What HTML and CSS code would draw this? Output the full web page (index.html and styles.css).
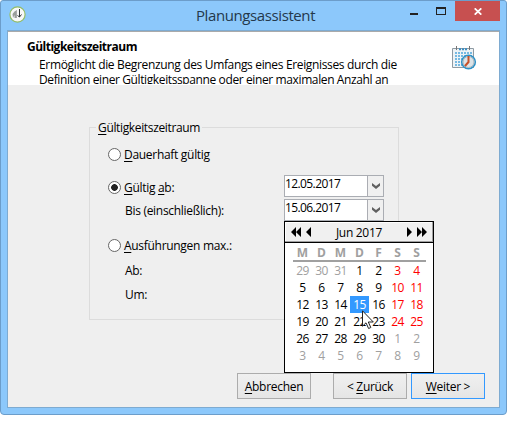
FILE: index.html
```html
<!DOCTYPE html>
<html lang="de">
<head>
<meta charset="utf-8">
<title>Planungsassistent</title>
<link rel="stylesheet" href="styles.css">
</head>
<body>
<main class="window">
  <header class="titlebar">
    <svg class="app-icon" width="17" height="17" viewBox="0 0 17 17"><circle cx="8.5" cy="8.5" r="7.6" fill="#f8f8f8" stroke="#94bd67" stroke-width="1.2"/><path d="M3.5 8l2-2.5L8 4v3l-1 1v4H5.5V9L4 12z" fill="#999d9a"/><path d="M7.5 5v7" stroke="#aaa"/><path d="M10.5 3v8M8.5 9.5l2 1.5 2-2.5" stroke="#303434" fill="none"/></svg>
    <h1 class="title">Planungsassistent</h1>
    <div class="controls">
      <svg class="glyph" width="38" height="20" viewBox="0 0 38 20"><path d="M1 12h8v2H1z" fill="#222"/><path d="M27 6h10v8H27zM28 8v5h8V8z" fill="#222" fill-rule="evenodd"/></svg>
      <div class="close"><svg width="8" height="7" viewBox="0 0 8 7"><path d="M.7.3l6.6 6.4M7.3.3L.7 6.7" stroke="#fff" stroke-width="1.7"/></svg></div>
    </div>
  </header>
  <section class="client">
    <header class="banner">
      <div class="banner-copy">
        <h2 class="heading">Gültigkeitszeitraum</h2>
        <p class="desc"><span class="d1">Ermöglicht die Begrenzung des Umfangs eines Ereignisses durch die</span><span class="d2">Definition einer Gültigkeitsspanne oder einer maximalen Anzahl an</span></p>
      </div>
      <svg class="schedule" width="25" height="24" viewBox="0 0 25 24"><path d="M.5 2.5h21v19H.5z" fill="#eef3f6" stroke="#8e9aa3"/><path d="M4.5 0v4M17.5 0v4" stroke="#777"/><path d="M7 3.2h9" stroke="#3a8dc2" stroke-width="2" stroke-dasharray="2 1"/><path d="M3 7h17M3 10h17M3 13h15M3 16h8M3 19h7" stroke="#4fa6dc" stroke-width="1.7" stroke-dasharray="2 1"/><circle cx="16.5" cy="16" r="6.8" fill="#dce3e7" stroke="#2d91c7" stroke-width="1.6"/><circle cx="16.5" cy="16" r="5.5" fill="none" stroke="#a8b4bc"/><path d="M16.5 10v6l-3.5 4" fill="none" stroke="#c6512a" stroke-width="2"/></svg>
    </header>
    <div class="body">
      <section class="group">
        <h3 class="legend"><u>G</u>ültigkeitszeitraum</h3>
        <div class="row r1"><i class="radio"></i><span><u>D</u>auerhaft gültig</span></div>
        <div class="row r2"><i class="radio on"></i><span><u>G</u>ültig <u>a</u>b:</span>
          <div class="combo"><span>12.05.2017</span><b><svg width="8" height="6" viewBox="0 0 8 6"><path d="M0 0l4 3 4-3v2.7L4 6 0 2.7z" fill="#606060"/></svg></b></div></div>
        <div class="row r3"><i class="spacer"></i><span>Bis (einschließlich):</span>
          <div class="combo"><span>15.06.2017</span><b><svg width="8" height="6" viewBox="0 0 8 6"><path d="M0 0l4 3 4-3v2.7L4 6 0 2.7z" fill="#606060"/></svg></b>
            <div class="calendar">
              <div class="cal-head">
                <svg width="21" height="10" viewBox="0 0 21 10"><path d="M5 0v10L0 5zM10 0v10L5 5zM20 0v10l-5-5z"/></svg>
                <span>Jun 2017</span>
                <svg width="21" height="10" viewBox="0 0 21 10"><path d="M1 0v10l5-5zM11 0v10l5-5zM16 0v10l5-5z"/></svg>
              </div>
              <div class="days names"><span>M</span><span>D</span><span>M</span><span>D</span><span>F</span><span>S</span><span>S</span></div>
              <div class="days">
                <span class="off">29</span><span class="off">30</span><span class="off">31</span><span>1</span><span>2</span><span class="we">3</span><span class="we">4</span>
                <span>5</span><span>6</span><span>7</span><span>8</span><span>9</span><span class="we">10</span><span class="we">11</span>
                <span>12</span><span>13</span><span>14</span><span class="sel">15</span><span>16</span><span class="we">17</span><span class="we">18</span>
                <span>19</span><span>20</span><span>21</span><span>22</span><span>23</span><span class="we">24</span><span class="we">25</span>
                <span>26</span><span>27</span><span>28</span><span>29</span><span>30</span><span class="off">1</span><span class="off">2</span>
                <span class="off">3</span><span class="off">4</span><span class="off">5</span><span class="off">6</span><span class="off">7</span><span class="off">8</span><span class="off">9</span>
              </div>
              <svg class="cursor" width="13" height="20" viewBox="0 0 13 20"><path d="M.5.8v15.4l3.5-3.4 2.6 5.7 2.2-1-2.5-5.5h5z" fill="#fff" stroke="#222"/></svg>
            </div>
          </div></div>
        <div class="row r4"><i class="radio"></i><span><u>A</u>usführungen max.:</span></div>
        <div class="row r5"><i class="spacer"></i><span>Ab:</span></div>
        <div class="row r6"><i class="spacer"></i><span>Um:</span></div>
      </section>
      <footer class="actions">
        <button><span><u>A</u>bbrechen</span></button>
        <button class="back"><span>&lt; <u>Z</u>urück</span></button>
        <button class="next"><span><u>W</u>eiter &gt;</span></button>
      </footer>
    </div>
  </section>
</main>
</body>
</html>
```
FILE: styles.css
```css
* { box-sizing: border-box; }
body { margin: 0; background: #fff; font: 12px/15px "Open Sans", "Noto Sans", sans-serif; letter-spacing: -.3px; color: #000; overflow: hidden; }
h1, h2, h3, p { margin: 0; font-size: 12px; font-weight: 400; }
u { text-decoration: underline; text-underline-offset: 2px; text-decoration-thickness: 1px; text-decoration-skip-ink: none; }
svg { display: block; flex: none; }
.window { width: 507px; height: 415px; padding: 0 6px 6px; background: #8cc8fb; border: 1px solid #6c9dca; border-radius: 3px 3px 4px 4px; }
.titlebar { height: 29px; display: flex; align-items: flex-start; }
.app-icon { margin: 5px 0 0 2px; }
.title { margin: 4px 0 0 170px; font-size: 15px; line-height: 20px; color: #24384b; white-space: nowrap; letter-spacing: -.5px; }
.title { letter-spacing: -.4px; }
.controls { margin-left: auto; display: flex; }
.glyph { margin-right: 8px; }
.close { width: 45px; height: 20px; background: #c75050; display: flex; align-items: center; justify-content: center; }
.client { height: 378px; border: 1px solid #7eabd1; background: #efefef; }
.banner { height: 54px; border-top: 1px solid #aaa; background: #fff; display: flex; overflow: hidden; }
.banner-copy { width: 424px; padding: 6px 0 0 19px; height: 52px; overflow: hidden; }
.heading { font-weight: 700; line-height: 17px; letter-spacing: -.5px; }
.desc { margin: 2px 0 0 12px; white-space: nowrap; }
.d1, .d2 { display: block; height: 15px; }
.d1 { letter-spacing: -.345px; }
.d2 { letter-spacing: -.385px; }
.schedule { margin: 14px 0 0 20px; }
.body { padding: 42px 14px 0 81px; }
.group { width: 310px; height: 193px; border: 1px solid #dcdcdc; }
.legend { width: max-content; margin: -8px 0 0 6px; padding: 0 2px; background: #efefef; height: 15px; letter-spacing: -.35px; }
.row { display: flex; align-items: center; height: 22px; padding-left: 18px; position: relative; white-space: nowrap; }
.r1 { margin-top: 8px; }
.r2 { margin-top: 11px; }
.r3 { margin-top: 1px; }
.r4 { margin-top: 13px; }
.r5 { margin-top: 3px; }
.r6 { margin-top: 2px; }
.radio { width: 13px; height: 13px; margin-right: 3px; border: 1px solid #666; border-radius: 50%; background: #fff; }
.on { background: radial-gradient(circle, #222 0 3px, #fff 3.7px); }
.spacer { width: 17px; }
.combo { position: absolute; left: 194px; top: 0; width: 100px; height: 22px; border: 1px solid #aaadb3; background: #fff; display: flex; }
.r2 .combo { top: -1px; }
.combo > span { flex: 1; line-height: 16px; letter-spacing: -.6px; }
.combo b { width: 16px; border-left: 1px solid #abadb3; background: #f0f0f0; display: flex; align-items: center; justify-content: center; }
.calendar { position: absolute; z-index: 2; left: -1px; top: 21px; width: 150px; height: 152px; border: 1px solid #000; background: #fff; }
.cal-head { height: 21px; padding: 0 6px 0 6px; display: flex; align-items: center; justify-content: space-between; background: #f0f0f0; border-bottom: 1px solid #000; box-shadow: inset -1px -1px #a0a0a0, inset 1px 1px #fff; }
.days { display: grid; grid-template-columns: repeat(7, 19px); grid-auto-rows: 17px; margin-left: 8px; width: 133px; line-height: 17px; text-align: center; letter-spacing: -.6px; }
.names { height: 19px; padding-top: 1px; border-bottom: 2px solid #a0a0a0; color: #a0a0a0; font-weight: 700; letter-spacing: 0; }
.off { color: #a0a0a0; }
.we { color: #f00; }
.sel { color: #fff; background: #3399ff; }
.cursor { position: absolute; left: 77px; top: 88px; }
.actions { display: flex; justify-content: flex-end; margin-top: 53px; gap: 4px; }
button { width: 74px; height: 26px; padding: 0; border: 1px solid #acacac; background: linear-gradient(#f0f0f0, #e5e5e5); color: #000; font: inherit; letter-spacing: -.3px; }
.back { margin-left: 18px; }
.next { border-color: #3399ff; }
```
